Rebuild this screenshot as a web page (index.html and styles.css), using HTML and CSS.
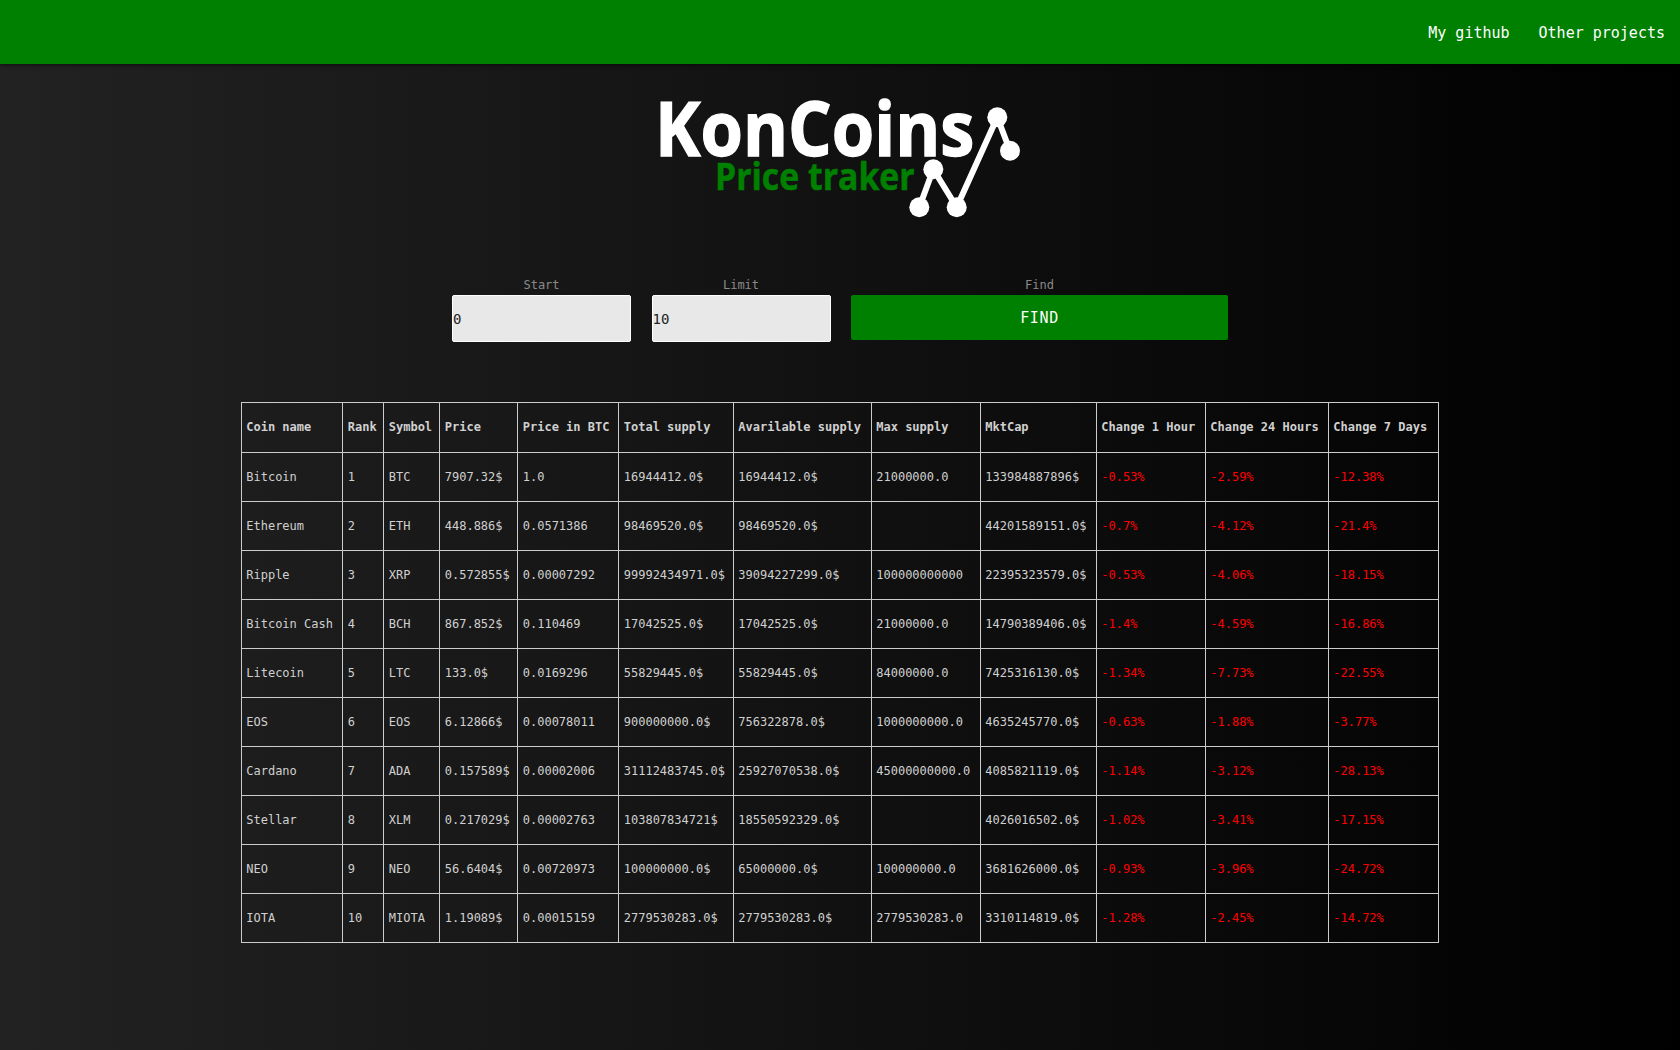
FILE: index.html
```html
<!DOCTYPE html>
<html lang="en">
<head>
<meta charset="utf-8">
<title>KonCoins Price traker</title>
<link rel="stylesheet" href="styles.css">
</head>
<body>
<header class="topbar">
  <nav class="nav">
    <a class="nav-link" href="#">My github</a>
    <a class="nav-link" href="#">Other projects</a>
  </nav>
</header>
<main class="main">
  <div class="logo">
    <svg class="logo-svg" width="400" height="150" viewBox="0 0 400 150" role="img" aria-label="KonCoins Price traker">
      <text class="logo-title">KonCoins</text>
      <text class="logo-sub">Price traker</text>
      <polyline class="logo-line" points="279.3,127.3 293.3,89.3 316.7,127.3 357.3,37.3 370,70.7"/>
      <circle class="logo-dot" cx="279.3" cy="127.3" r="10"/>
      <circle class="logo-dot" cx="293.3" cy="89.3" r="10"/>
      <circle class="logo-dot" cx="316.7" cy="127.3" r="10"/>
      <circle class="logo-dot" cx="357.3" cy="37.3" r="10"/>
      <circle class="logo-dot" cx="370" cy="70.7" r="10"/>
    </svg>
  </div>
  <form class="controls">
    <div class="field field-input">
      <label class="field-label" for="start">Start</label>
      <input class="text-input" id="start" type="text" value="0">
    </div>
    <div class="field field-input">
      <label class="field-label" for="limit">Limit</label>
      <input class="text-input" id="limit" type="text" value="10">
    </div>
    <div class="field field-button">
      <span class="field-label">Find</span>
      <button class="find-button" type="button">FIND</button>
    </div>
  </form>
  <table class="coins">
    <colgroup>
      <col class="c1"><col class="c2"><col class="c3"><col class="c4"><col class="c5"><col class="c6"><col class="c7"><col class="c8"><col class="c9"><col class="c10"><col class="c11"><col class="c12">
    </colgroup>
    <thead>
      <tr><th>Coin name</th><th>Rank</th><th>Symbol</th><th>Price</th><th>Price in BTC</th><th>Total supply</th><th>Avarilable supply</th><th>Max supply</th><th>MktCap</th><th>Change 1 Hour</th><th>Change 24 Hours</th><th>Change 7 Days</th></tr>
    </thead>
    <tbody>
      <tr><td>Bitcoin</td><td>1</td><td>BTC</td><td>7907.32$</td><td>1.0</td><td>16944412.0$</td><td>16944412.0$</td><td>21000000.0</td><td>133984887896$</td><td class="neg">-0.53%</td><td class="neg">-2.59%</td><td class="neg">-12.38%</td></tr>
      <tr><td>Ethereum</td><td>2</td><td>ETH</td><td>448.886$</td><td>0.0571386</td><td>98469520.0$</td><td>98469520.0$</td><td></td><td>44201589151.0$</td><td class="neg">-0.7%</td><td class="neg">-4.12%</td><td class="neg">-21.4%</td></tr>
      <tr><td>Ripple</td><td>3</td><td>XRP</td><td>0.572855$</td><td>0.00007292</td><td>99992434971.0$</td><td>39094227299.0$</td><td>100000000000</td><td>22395323579.0$</td><td class="neg">-0.53%</td><td class="neg">-4.06%</td><td class="neg">-18.15%</td></tr>
      <tr><td>Bitcoin Cash</td><td>4</td><td>BCH</td><td>867.852$</td><td>0.110469</td><td>17042525.0$</td><td>17042525.0$</td><td>21000000.0</td><td>14790389406.0$</td><td class="neg">-1.4%</td><td class="neg">-4.59%</td><td class="neg">-16.86%</td></tr>
      <tr><td>Litecoin</td><td>5</td><td>LTC</td><td>133.0$</td><td>0.0169296</td><td>55829445.0$</td><td>55829445.0$</td><td>84000000.0</td><td>7425316130.0$</td><td class="neg">-1.34%</td><td class="neg">-7.73%</td><td class="neg">-22.55%</td></tr>
      <tr><td>EOS</td><td>6</td><td>EOS</td><td>6.12866$</td><td>0.00078011</td><td>900000000.0$</td><td>756322878.0$</td><td>1000000000.0</td><td>4635245770.0$</td><td class="neg">-0.63%</td><td class="neg">-1.88%</td><td class="neg">-3.77%</td></tr>
      <tr><td>Cardano</td><td>7</td><td>ADA</td><td>0.157589$</td><td>0.00002006</td><td>31112483745.0$</td><td>25927070538.0$</td><td>45000000000.0</td><td>4085821119.0$</td><td class="neg">-1.14%</td><td class="neg">-3.12%</td><td class="neg">-28.13%</td></tr>
      <tr><td>Stellar</td><td>8</td><td>XLM</td><td>0.217029$</td><td>0.00002763</td><td>103807834721$</td><td>18550592329.0$</td><td></td><td>4026016502.0$</td><td class="neg">-1.02%</td><td class="neg">-3.41%</td><td class="neg">-17.15%</td></tr>
      <tr><td>NEO</td><td>9</td><td>NEO</td><td>56.6404$</td><td>0.00720973</td><td>100000000.0$</td><td>65000000.0$</td><td>100000000.0</td><td>3681626000.0$</td><td class="neg">-0.93%</td><td class="neg">-3.96%</td><td class="neg">-24.72%</td></tr>
      <tr><td>IOTA</td><td>10</td><td>MIOTA</td><td>1.19089$</td><td>0.00015159</td><td>2779530283.0$</td><td>2779530283.0$</td><td>2779530283.0</td><td>3310114819.0$</td><td class="neg">-1.28%</td><td class="neg">-2.45%</td><td class="neg">-14.72%</td></tr>
    </tbody>
  </table>
</main>
</body>
</html>
```

FILE: styles.css
```css
* { box-sizing: border-box; }

html, body { height: 100%; }

body {
  margin: 0;
  overflow: hidden;
  background: linear-gradient(to right, #222222, #000000);
  font-family: "DejaVu Sans Mono", monospace;
  color: #cccccc;
}

.topbar {
  height: 64px;
  background: #008000;
  display: flex;
  align-items: center;
  justify-content: flex-end;
  padding: 1px 15px 0 0;
  box-shadow: 0 1px 4px rgba(0, 0, 0, 0.6);
}

.nav { display: flex; gap: 29px; }

.nav-link {
  color: #ffffff;
  text-decoration: none;
  font-size: 15px;
}

.main {
  display: flex;
  flex-direction: column;
  align-items: center;
  padding-top: 16px;
}

.logo { height: 150px; width: 400px; }
.logo-svg { display: block; }

.logo-title {
  font-family: "Open Sans", sans-serif;
  font-weight: 700;
  font-size: 68.6px;
  fill: #ffffff;
  stroke: #ffffff;
  stroke-width: 1.2px;
  transform: translate(15px, 76px) scaleY(1.108);
}

.logo-sub {
  font-family: "Open Sans", sans-serif;
  font-weight: 700;
  font-size: 33.8px;
  fill: #008000;
  stroke: #008000;
  stroke-width: 0.5px;
  transform: translate(75px, 110px) scaleY(1.12);
}

.logo-line {
  fill: none;
  stroke: #ffffff;
  stroke-width: 6;
  stroke-linejoin: round;
}

.logo-dot { fill: #ffffff; }

.controls {
  display: flex;
  gap: 20.5px;
  margin-top: 47px;
  align-items: flex-start;
}

.field {
  display: flex;
  flex-direction: column;
  align-items: center;
}

.field-input { width: 179px; }
.field-button { width: 377px; }

.field-label {
  height: 18px;
  line-height: 16px;
  font-size: 12px;
  color: #8a8a8a;
}

.text-input {
  width: 100%;
  height: 47px;
  border: 1px solid #ffffff;
  border-radius: 2px;
  background: #e8e8e8;
  padding: 0;
  font-family: "DejaVu Sans Mono", monospace;
  font-size: 14px;
  color: #222222;
}

.find-button {
  width: 100%;
  height: 45px;
  border: 0;
  border-radius: 2px;
  background: #008000;
  color: #ffffff;
  font-family: "DejaVu Sans Mono", monospace;
  font-size: 15px;
  letter-spacing: 0.6px;
}

.coins {
  table-layout: fixed;
  border-collapse: collapse;
  width: 1196.5px;
  margin-top: 60px;
  font-size: 12px;
}

.c1 { width: 101.5px; }
.c2 { width: 41px; }
.c3 { width: 56px; }
.c4 { width: 78px; }
.c5 { width: 101px; }
.c6 { width: 114.5px; }
.c7 { width: 138px; }
.c8 { width: 109px; }
.c9 { width: 116px; }
.c10 { width: 109px; }
.c11 { width: 123px; }
.c12 { width: 110.5px; }

.coins th,
.coins td {
  border: 1px solid #cccccc;
  padding: 0 0 0 4.5px;
  text-align: left;
  white-space: nowrap;
  overflow: hidden;
  color: #d0d0d0;
}

.coins th {
  height: 50px;
  padding-bottom: 2px;
  font-weight: 700;
}

.coins td { height: 49px; font-weight: 400; }
.coins td.neg { color: #ff0000; }
```
